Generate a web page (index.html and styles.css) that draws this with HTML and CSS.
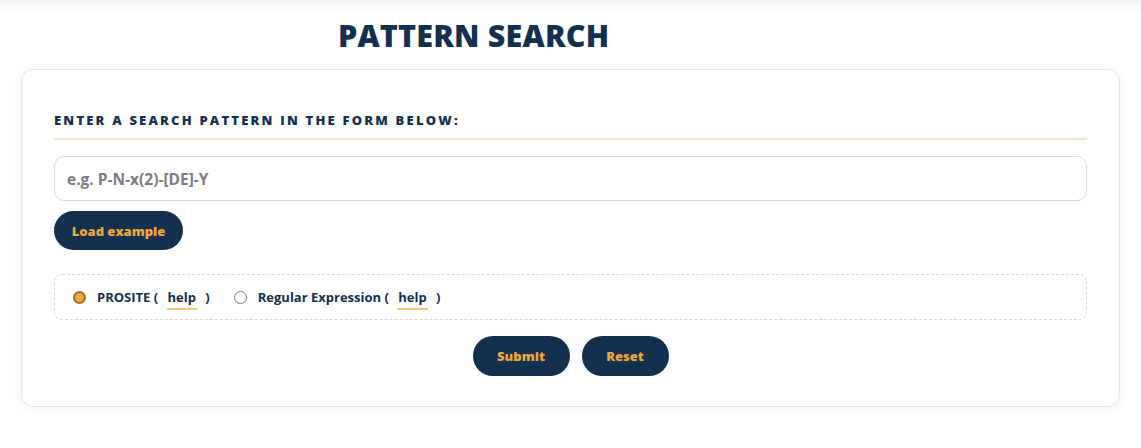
FILE: index.html
```html
<!DOCTYPE html>
<html lang="en">
<head>
<meta charset="utf-8">
<title>Pattern Search</title>
<link rel="stylesheet" href="styles.css">
</head>
<body>
<div class="topshade"></div>
<header class="page-head">
  <h1 class="page-title">PATTERN SEARCH</h1>
</header>
<main class="card">
  <h2 class="section-title">ENTER A SEARCH PATTERN IN THE FORM BELOW:</h2>
  <input class="pattern-input" type="text" placeholder="e.g. P-N-x(2)-[DE]-Y">
  <button class="btn btn-small" type="button">Load example</button>
  <div class="mode-box">
    <label class="mode">
      <span class="radio radio-on"></span>
      <span class="mode-text">PROSITE ( <a class="help" href="#">help</a> )</span>
    </label>
    <label class="mode">
      <span class="radio"></span>
      <span class="mode-text">Regular Expression ( <a class="help" href="#">help</a> )</span>
    </label>
  </div>
  <div class="actions">
    <button class="btn btn-submit" type="button">Submit</button>
    <button class="btn btn-reset" type="button">Reset</button>
  </div>
</main>
</body>
</html>
```
FILE: styles.css
```css
* { box-sizing: border-box; }
html, body { margin: 0; padding: 0; background: #fff; }
body {
  font-family: "Open Sans", "Noto Sans", sans-serif;
  color: #14304f;
  position: relative;
  height: 448px;
  overflow: hidden;
}
.topshade {
  position: absolute;
  left: 0; right: 0; top: 0;
  height: 12px;
  background: linear-gradient(#f1f1f1, rgba(255,255,255,0));
}
.page-head {
  padding: 14px 0 0 338px;
  height: 69px;
}
.page-title {
  margin: 0;
  font-size: 30.5px;
  font-weight: 800;
  line-height: 42px;
  color: #14304f;
  letter-spacing: 0.2px;
}
.card {
  margin: 0 21px;
  width: 1099px;
  height: 338px;
  border: 1px solid #e2e6ef;
  border-radius: 12px;
  box-shadow: 0 2px 12px rgba(30, 40, 80, 0.05);
  padding: 36px 32px 0 32px;
  display: flex;
  flex-direction: column;
  align-items: flex-start;
}
.section-title {
  margin: 0;
  width: 100%;
  font-size: 13px;
  font-weight: 800;
  letter-spacing: 2.2px;
  line-height: 28px;
  padding-bottom: 4px;
  border-bottom: 2px solid #f7e5c6;
  color: #14304f;
}
.pattern-input {
  margin-top: 16px;
  width: 100%;
  height: 45px;
  border: 1px solid #d5d9e1;
  border-radius: 10px;
  padding: 0 12px;
  font-family: "Open Sans", sans-serif;
  font-size: 15.5px;
  font-weight: 700;
  color: #14304f;
  outline: none;
}
.pattern-input::placeholder { color: #7a7d82; }
.btn {
  border: none;
  border-radius: 20px;
  background: #14304f;
  color: #f0a73c;
  font-family: "Open Sans", sans-serif;
  font-weight: 800;
  font-size: 13px;
  height: 39px;
  padding: 0;
  cursor: pointer;
}
.btn-small {
  margin-top: 10px;
  width: 129px;
}
.mode-box {
  margin-top: 24px;
  width: 100%;
  height: 46px;
  border: 1px dashed #d6d8de;
  border-radius: 8px;
  display: flex;
  align-items: center;
  padding-left: 18px;
  gap: 24px;
}
.mode {
  display: flex;
  align-items: center;
  gap: 11px;
  font-size: 13px;
  font-weight: 700;
  color: #14304f;
}
.radio {
  width: 13px;
  height: 13px;
  border-radius: 50%;
  border: 1px solid #7b7b7b;
  background: #fff;
}
.radio-on {
  border: 2px solid #a06a20;
  background: #eba847;
}
.mode-text { white-space: pre; }
.help {
  color: #14304f;
  text-decoration: none;
  padding: 0 1px 2px;
  border-bottom: 2px solid #f2c77f;
  margin: 0 5px;
}
.actions {
  margin-top: 16px;
  align-self: stretch;
  display: flex;
  justify-content: center;
  gap: 12px;
}
.btn-submit { width: 97px; height: 40px; }
.btn-reset { width: 87px; height: 40px; }
```
